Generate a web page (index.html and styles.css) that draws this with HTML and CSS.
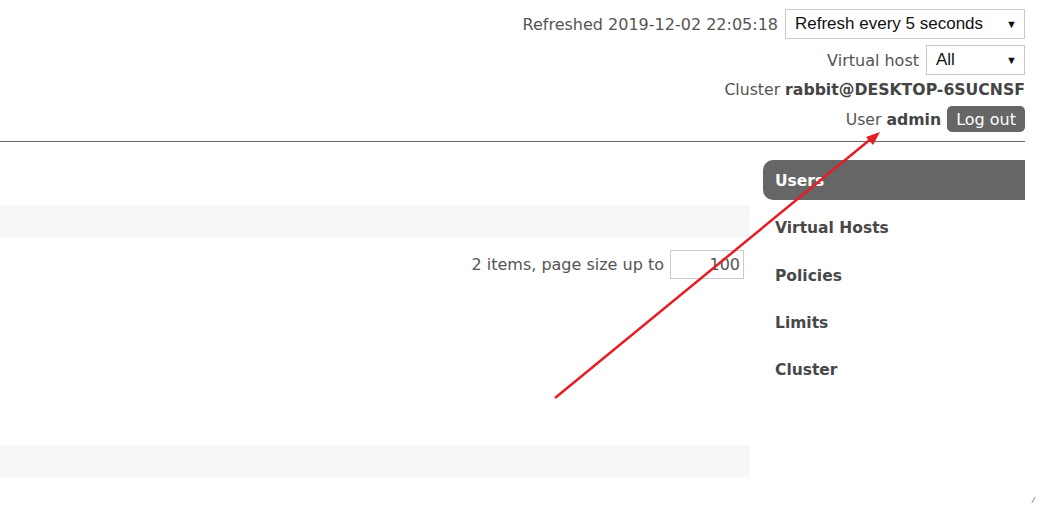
FILE: index.html
```html
<!DOCTYPE html>
<html lang="en">
<head>
  <meta charset="UTF-8" />
  <title>RabbitMQ Management - Admin</title>
  <link rel="stylesheet" href="styles.css">
</head>
<body>
  <div class="header">
    <div class="header-row">
      <span>Refreshed 2019-12-02 22:05:18</span>
      <div class="fake-select wide">Refresh every 5 seconds<span class="caret">&#9660;</span></div>
    </div>
    <div class="header-row">
      <span>Virtual host</span>
      <div class="fake-select narrow">All<span class="caret">&#9660;</span></div>
    </div>
    <div class="header-row text-row">
      <span>Cluster <b>rabbit@DESKTOP-6SUCNSF</b></span>
    </div>
    <div class="header-row text-row user-row">
      <span>User <b>admin</b></span>
      <button class="logout-btn">Log out</button>
    </div>
  </div>
  <hr class="divider">

  <div class="main">
    <div class="content">
      <div class="section-bar"></div>
      <div class="pagination">
        <span>2 items, page size up to</span>
        <div class="page-size">100</div>
      </div>
      <div class="section-bar"></div>
    </div>
    <ul class="admin-nav">
      <li class="active">Users</li>
      <li>Virtual Hosts</li>
      <li>Policies</li>
      <li>Limits</li>
      <li>Cluster</li>
    </ul>
  </div>

  <!-- annotation arrow drawn over the screenshot -->
  <svg class="annotation" width="1043" height="507" viewBox="0 0 1043 507">
    <line x1="555" y1="398" x2="872" y2="138" stroke="#e41e26" stroke-width="2.5" />
    <polygon points="880,132 866,137 873,145" fill="#e41e26" />
  </svg>
  <div class="resize-grip"></div>
</body>
</html>
```

FILE: styles.css
```css
body {
  font-family: 'DejaVu Sans', Verdana, sans-serif;
  font-size: 16px;
  color: #555;
  background: #fff;
  margin: 0;
  padding: 0;
  width: 1043px;
  height: 507px;
  overflow: hidden;
  position: relative;
}
b {
  color: #444;
}
.header {
  width: 1025px;
  padding-top: 9px;
  display: flex;
  flex-direction: column;
  align-items: flex-end;
}
.header-row {
  display: flex;
  align-items: center;
  gap: 7px;
}
.header-row:first-child {
  margin-bottom: 6px;
}
.header-row.text-row {
  height: 29px;
  font-size: 15.7px;
}
.header-row.user-row {
  height: 30px;
  gap: 6px;
}
.fake-select {
  box-sizing: border-box;
  height: 30px;
  border: 1px solid #c8c8c8;
  background: #fff;
  font-family: 'Liberation Sans', Arial, sans-serif;
  font-size: 17px;
  color: #111;
  display: flex;
  align-items: center;
  justify-content: space-between;
  padding: 0 7px 0 9px;
}
.fake-select.wide {
  width: 240px;
}
.fake-select.narrow {
  width: 99px;
}
.caret {
  font-size: 11px;
  color: #111;
}
.logout-btn {
  background: #666;
  color: #fff;
  border: none;
  border-radius: 5px;
  font-family: 'DejaVu Sans', Verdana, sans-serif;
  font-size: 16px;
  padding: 0 9px;
  height: 26px;
}
.divider {
  width: 1025px;
  margin: 7px 0 0;
  border: none;
  border-top: 1px solid #666;
}
.main {
  display: flex;
  width: 1025px;
}
.content {
  width: 750px;
  padding-top: 63px;
}
.section-bar {
  height: 32px;
  background: #f7f7f7;
}
.pagination {
  display: flex;
  justify-content: flex-end;
  align-items: center;
  gap: 6px;
  padding: 13px 6px 0 0;
  height: 29px;
  margin-bottom: 166px;
}
.page-size {
  box-sizing: border-box;
  width: 74px;
  height: 29px;
  border: 1px solid #ccc;
  text-align: right;
  padding: 4px 3px 0 0;
  color: #555;
}
.admin-nav {
  list-style: none;
  margin: 18px 0 0 13px;
  padding: 0;
  flex: 1;
  font-size: 15.5px;
}
.admin-nav li {
  font-weight: bold;
  color: #484848;
  height: 40px;
  line-height: 42px;
  padding-left: 12px;
  margin-bottom: 7.3px;
}
.admin-nav li.active {
  background: #666;
  color: #fff;
  border-radius: 10px 0 0 10px;
}
.annotation {
  position: absolute;
  left: 0;
  top: 0;
  pointer-events: none;
}
.resize-grip {
  position: absolute;
  right: 9px;
  bottom: 4px;
  width: 2px;
  height: 6px;
  border-right: 1px solid #888;
  transform: skewX(-30deg);
}
```
